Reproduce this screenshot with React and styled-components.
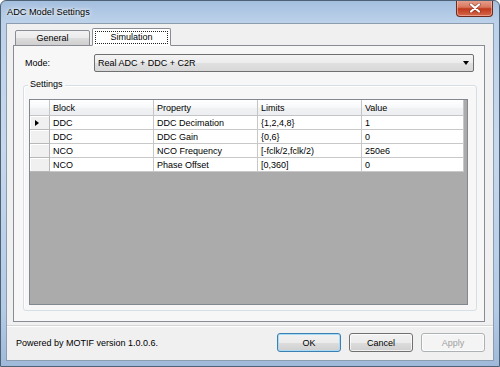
import React from 'react';
import styled, { createGlobalStyle } from 'styled-components';

const GlobalStyle = createGlobalStyle`
  html, body {
    margin: 0;
    padding: 0;
    background: #ffffff;
  }

  body {
    font-family: "Liberation Sans", Arial, sans-serif;
    font-size: 9px;
    color: #000;
  }
`;

const Frame = styled.div`
  background: linear-gradient(180deg, #a4bfdf 0%, #bdd2ea 6%, #c6d8ed 40%, #b4cbe6 85%, #9fb9da 100%);
  border: 1px solid #4f6275;
  border-radius: 6px 6px 0 0;
  box-sizing: border-box;
  display: flex;
  flex-direction: column;
  height: 367px;
  overflow: hidden;
  padding: 0 5px 5px;
  width: 500px;
`;

const TitleBar = styled.div`
  align-items: flex-start;
  display: flex;
  height: 22px;
`;

const Title = styled.span`
  color: #000;
  font-size: 9.2px;
  margin: 6px 0 0 1px;
  text-shadow: 0 0 6px #ffffff, 0 0 3px #ffffff;
`;

const CloseButton = styled.div`
  align-items: center;
  background: linear-gradient(180deg, #e8a493 0%, #d8765e 45%, #c0391c 55%, #d56a4c 100%);
  border: 1px solid #6d2a1d;
  border-radius: 0 0 4px 4px;
  border-top: none;
  box-shadow: inset 0 0 0 1px rgba(255, 210, 200, 0.5);
  display: flex;
  height: 16px;
  justify-content: center;
  margin: -1px 1px 0 auto;
  width: 35px;
`;

const Client = styled.div`
  background: #f0f0f0;
  border: 1px solid #8d9db0;
  display: flex;
  flex: 1;
  flex-direction: column;
`;

const TabArea = styled.div`
  display: flex;
  flex-direction: column;
  padding: 5px 8px 0 6px;
`;

const TabStrip = styled.div`
  align-items: flex-end;
  display: flex;
  gap: 2px;
  height: 17px;
  margin-bottom: -1px;
  padding-left: 2px;
  position: relative;
  z-index: 1;
`;

const Tab = styled.div`
  align-items: center;
  background: ${(props) => props.$active
    ? '#ffffff'
    : 'linear-gradient(180deg, #f2f2f2 0%, #ebebeb 50%, #dddddd 51%, #cfcfcf 100%)'};
  border: 1px solid #898c95;
  border-bottom: ${(props) => props.$active ? '1px solid #ffffff' : '1px solid #898c95'};
  border-radius: 2px 2px 0 0;
  box-sizing: border-box;
  display: flex;
  height: ${(props) => props.$active ? '18px' : '16px'};
  justify-content: center;
  padding: 0 2px;
  width: ${(props) => props.$active ? '79px' : '75px'};
`;

const TabLabel = styled.span`
  align-items: center;
  border: 1px dotted ${(props) => props.$focused ? '#222' : 'transparent'};
  box-sizing: border-box;
  display: flex;
  height: 13px;
  justify-content: center;
  width: 100%;
`;

const Panel = styled.div`
  background: #f7f7f7;
  border: 1px solid #898c95;
  box-sizing: border-box;
  display: flex;
  flex-direction: column;
  height: 277px;
  padding: 8px 10px 10px 11px;
`;

const ModeRow = styled.div`
  align-items: center;
  display: flex;
`;

const ModeLabel = styled.span`
  width: 69px;
`;

const Combo = styled.div`
  align-items: center;
  background: linear-gradient(180deg, #f4f4f4 0%, #ececec 50%, #e0e0e0 51%, #d8d8d8 100%);
  border: 1px solid #707070;
  border-radius: 2px;
  box-sizing: border-box;
  display: flex;
  flex: 1;
  height: 18px;
  justify-content: space-between;
  padding: 0 4px 0 3px;
`;

const ComboArrow = styled.span`
  border-left: 3px solid transparent;
  border-right: 3px solid transparent;
  border-top: 4px solid #000;
  height: 0;
  width: 0;
`;

const Group = styled.div`
  border: 1px solid #d5dfe5;
  border-radius: 3px;
  box-shadow: inset 1px 1px 0 #ffffff;
  display: flex;
  flex: 1;
  margin: 13px -3px 0 -2px;
  padding: 13px 8px 5px 5px;
  position: relative;
`;

const Legend = styled.span`
  background: #f7f7f7;
  left: 4px;
  padding: 0 2px;
  position: absolute;
  top: -7px;
`;

const Grid = styled.div`
  background: #ababab;
  border: 1px solid #828790;
  display: flex;
  flex: 1;
  flex-direction: column;
`;

const Row = styled.div`
  display: flex;
  height: ${(props) => props.$header ? '16px' : '14px'};
`;

const HeaderCell = styled.div`
  align-items: center;
  background: linear-gradient(180deg, #ffffff 0%, #f7f8fa 50%, #f1f2f4 51%, #eceef1 100%);
  border-bottom: 1px solid #c5c5c5;
  border-right: 1px solid #c5c5c5;
  box-sizing: border-box;
  display: flex;
  padding-left: 3px;
  width: ${(props) => props.$w}px;
`;

const RowHead = styled.div`
  align-items: center;
  background: #f0f0f0;
  border-bottom: 1px solid #b8b8b8;
  border-right: 1px solid #b8b8b8;
  box-shadow: inset 1px 1px 0 #ffffff;
  box-sizing: border-box;
  display: flex;
  padding-left: 5px;
  width: 20px;
`;

const Cell = styled.div`
  align-items: center;
  background: #ffffff;
  border-bottom: 1px solid #c8c8c8;
  border-right: 1px solid #c8c8c8;
  box-sizing: border-box;
  display: flex;
  padding-left: 3px;
  white-space: nowrap;
  width: ${(props) => props.$w}px;
`;

const Pointer = styled.span`
  border-bottom: 3px solid transparent;
  border-left: 4px solid #000;
  border-top: 3px solid transparent;
  height: 0;
  width: 0;
`;

const Separator = styled.div`
  border-bottom: 1px solid #ffffff;
  border-top: 1px solid #d5d5d5;
  margin-top: 3px;
`;

const Footer = styled.div`
  align-items: center;
  display: flex;
  padding: 6px 8px 0 9px;
`;

const Credit = styled.span`
  flex: 1;
  padding-top: 1px;
`;

const Buttons = styled.div`
  display: flex;
  gap: 8px;
`;

const Button = styled.button`
  background: ${(props) => props.$disabled
    ? '#f4f4f4'
    : 'linear-gradient(180deg, #f2f2f2 0%, #ebebeb 50%, #dddddd 51%, #cfcfcf 100%)'};
  border: 1px solid ${(props) => {
    if (props.$disabled) return '#adb2b5';
    if (props.$default) return '#3c7fb1';
    return '#707070';
  }};
  border-radius: 3px;
  box-shadow: ${(props) => props.$default ? 'inset 0 0 0 1px #a9dbf6' : 'inset 0 0 0 1px rgba(255,255,255,0.7)'};
  color: ${(props) => props.$disabled ? '#a0a0a0' : '#000'};
  font-family: "Liberation Sans", Arial, sans-serif;
  font-size: 9px;
  height: 19px;
  padding: 0;
  width: 64px;
`;

const columns = [
  { key: 'block', label: 'Block', w: 104 },
  { key: 'property', label: 'Property', w: 104 },
  { key: 'limits', label: 'Limits', w: 104 },
  { key: 'value', label: 'Value', w: 102 },
];

const rows = [
  { block: 'DDC', property: 'DDC Decimation', limits: '{1,2,4,8}', value: '1', current: true },
  { block: 'DDC', property: 'DDC Gain', limits: '{0,6}', value: '0' },
  { block: 'NCO', property: 'NCO Frequency', limits: '[-fclk/2,fclk/2)', value: '250e6' },
  { block: 'NCO', property: 'Phase Offset', limits: '[0,360]', value: '0' },
];

const CloseIcon = () => (
  <svg width="12" height="10" viewBox="0 0 12 10">
    <path d="M2 1.5 L10 8.5 M10 1.5 L2 8.5" stroke="#5a1a10" strokeWidth="3.6" strokeLinecap="round" opacity="0.5" />
    <path d="M2 1.5 L10 8.5 M10 1.5 L2 8.5" stroke="#ffffff" strokeWidth="2.2" strokeLinecap="round" />
  </svg>
);

const App = () => (
  <>
    <GlobalStyle />
    <Frame>
      <TitleBar>
        <Title>ADC Model Settings</Title>
        <CloseButton>
          <CloseIcon />
        </CloseButton>
      </TitleBar>
      <Client>
        <TabArea>
          <TabStrip>
            <Tab>
              <TabLabel>General</TabLabel>
            </Tab>
            <Tab $active>
              <TabLabel $focused>Simulation</TabLabel>
            </Tab>
          </TabStrip>
          <Panel>
            <ModeRow>
              <ModeLabel>Mode:</ModeLabel>
              <Combo>
                <span>Real ADC + DDC + C2R</span>
                <ComboArrow />
              </Combo>
            </ModeRow>
            <Group>
              <Legend>Settings</Legend>
              <Grid>
                <Row $header>
                  <HeaderCell $w={20} />
                  {columns.map((col) => (
                    <HeaderCell key={col.key} $w={col.w}>{col.label}</HeaderCell>
                  ))}
                </Row>
                {rows.map((row, i) => (
                  <Row key={i}>
                    <RowHead>{row.current && <Pointer />}</RowHead>
                    {columns.map((col) => (
                      <Cell key={col.key} $w={col.w}>{row[col.key]}</Cell>
                    ))}
                  </Row>
                ))}
              </Grid>
            </Group>
          </Panel>
        </TabArea>
        <Separator />
        <Footer>
          <Credit>Powered by MOTIF version 1.0.0.6.</Credit>
          <Buttons>
            <Button $default>OK</Button>
            <Button>Cancel</Button>
            <Button $disabled>Apply</Button>
          </Buttons>
        </Footer>
      </Client>
    </Frame>
  </>
);

export default App;
